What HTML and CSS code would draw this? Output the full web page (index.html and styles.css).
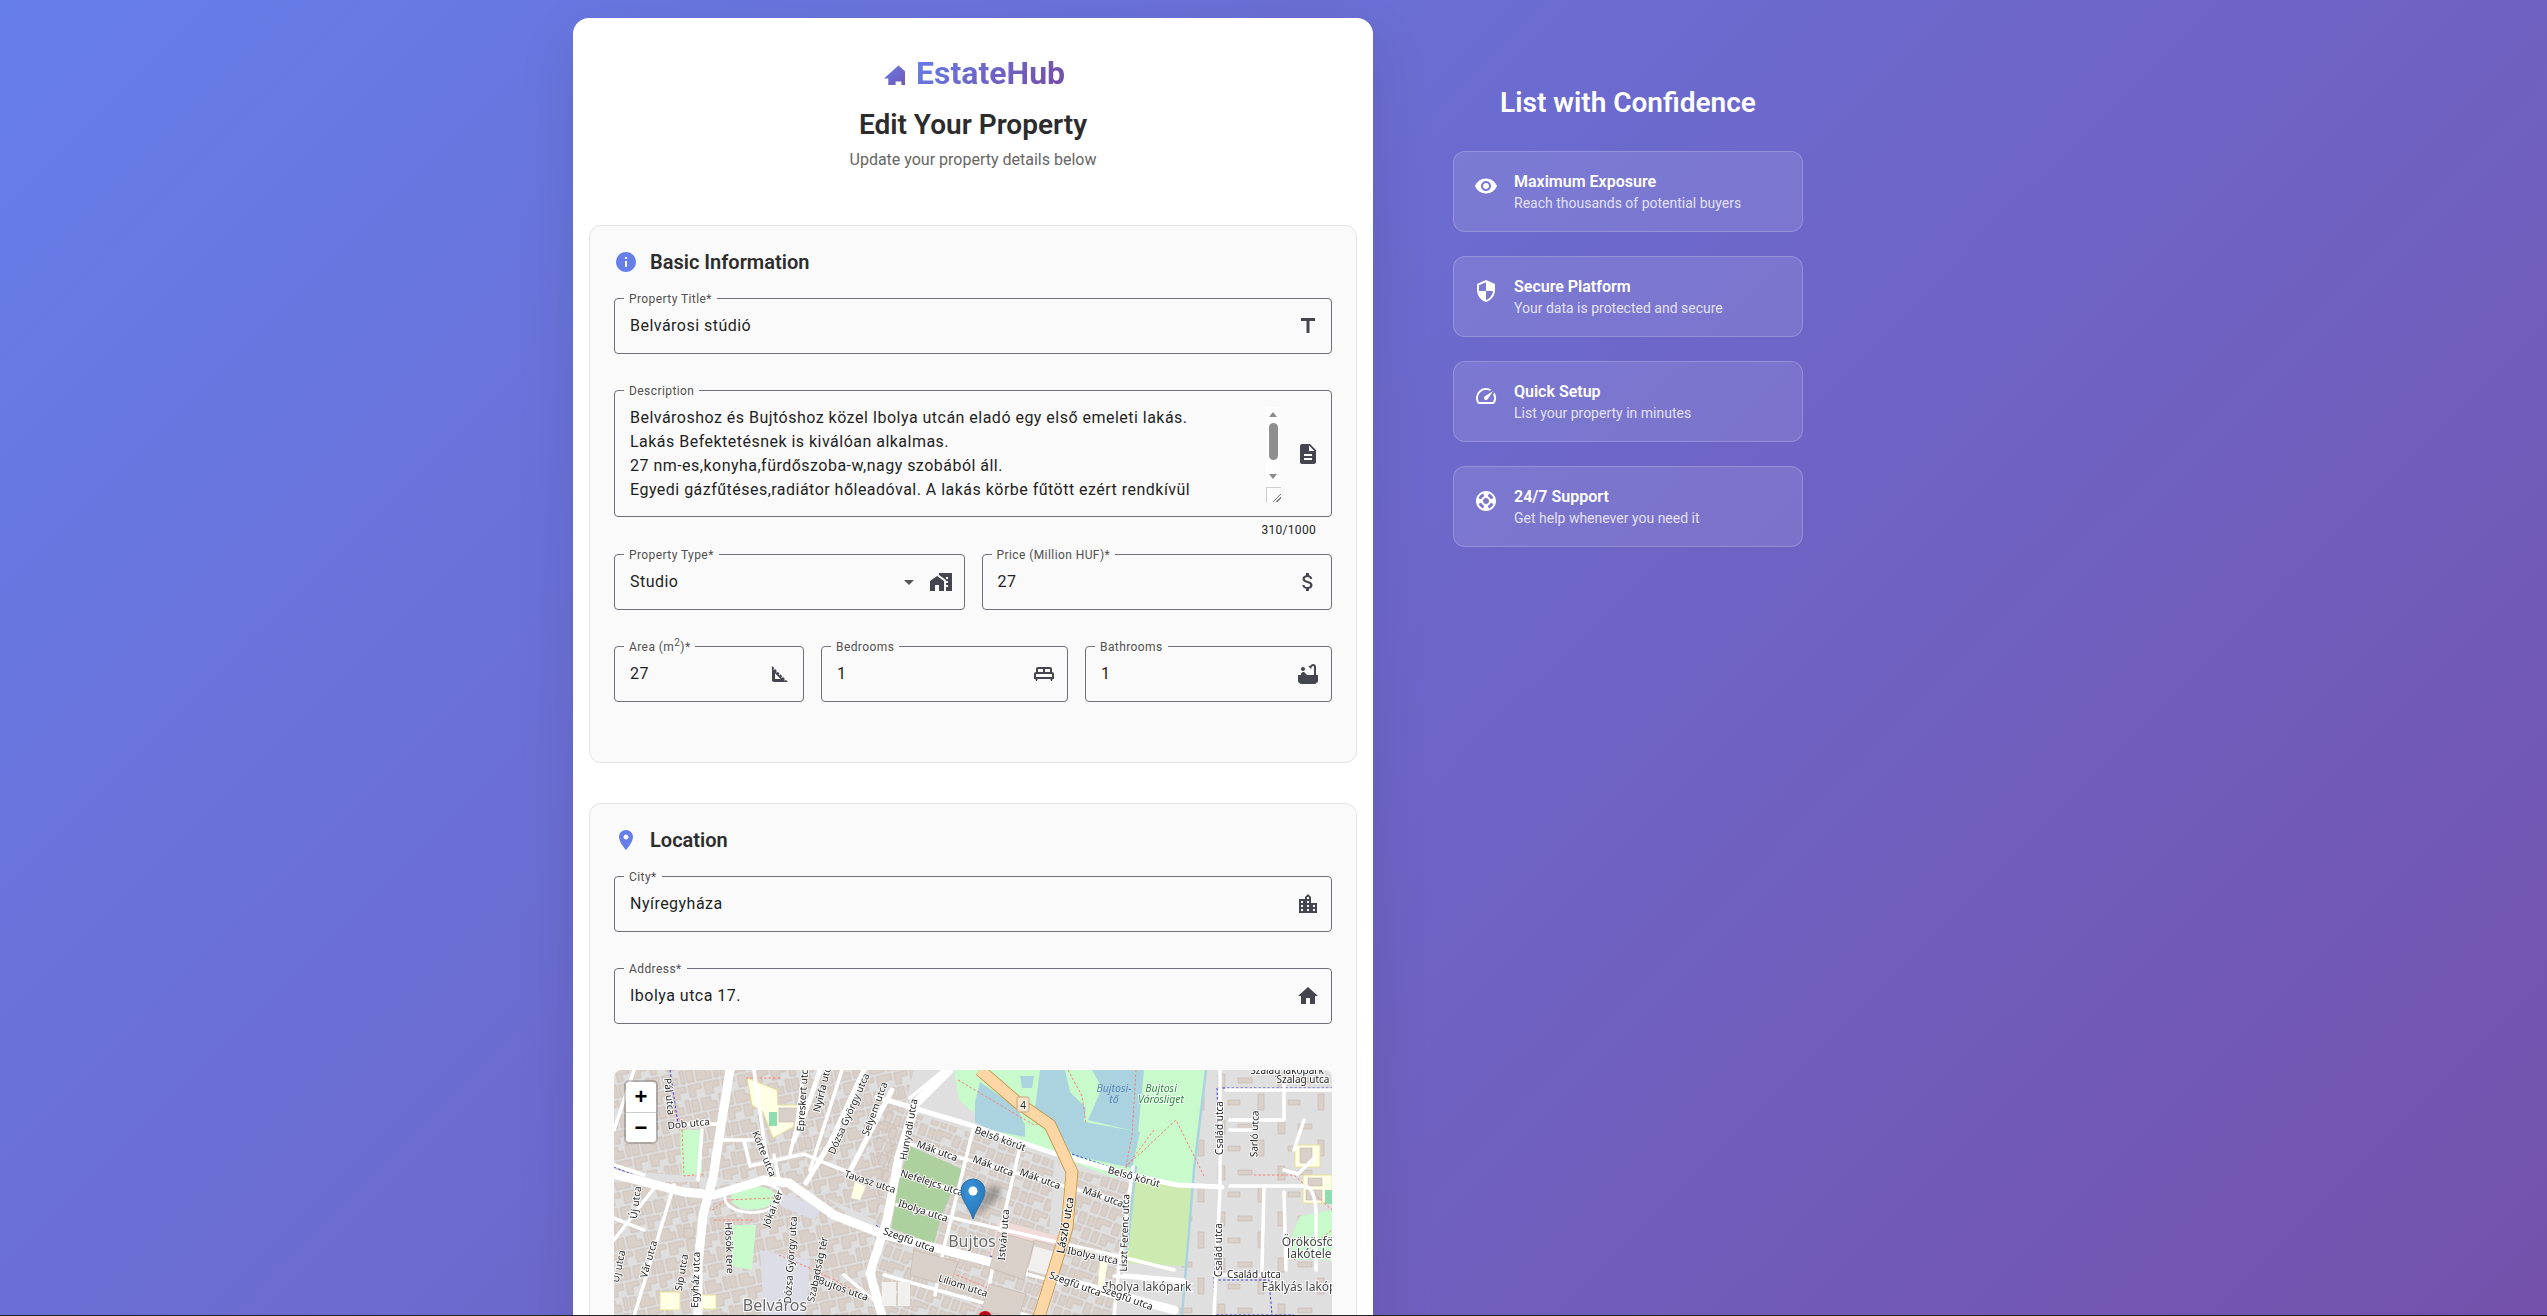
FILE: index.html
```html
<!DOCTYPE html>
<html lang="en">
<head>
    <meta charset="UTF-8">
    <title>EstateHub - Edit Your Property</title>
    <link rel="stylesheet" href="styles.css">
</head>
<body>
<div class="page">
    <main class="form-card">
        <header class="form-header">
            <div class="logo">
                <svg class="logo-icon" viewBox="0 0 16.6 16">
                    <defs>
                        <linearGradient id="logo-grad" x1="0" y1="0" x2="1" y2="1">
                            <stop offset="0" stop-color="#667eea"/>
                            <stop offset="1" stop-color="#764ba2"/>
                        </linearGradient>
                    </defs>
                    <path fill="url(#logo-grad)" d="M10 20v-6h4v6h5v-8h3L12 3 2 12h3v8z"/>
                </svg>
                <span class="logo-text">EstateHub</span>
            </div>
            <h1>Edit Your Property</h1>
            <p>Update your property details below</p>
        </header>

        <section class="section">
            <h2 class="section-title">
                <svg class="section-icon" viewBox="0 0 24 24"><path d="M12 2C6.48 2 2 6.48 2 12s4.48 10 10 10 10-4.48 10-10S17.52 2 12 2zm1 15h-2v-6h2v6zm0-8h-2V7h2v2z"/></svg>
                Basic Information
            </h2>

            <div class="field">
                <label class="field-label">Property Title*</label>
                <input class="field-input" type="text" value="Belvárosi stúdió">
                <svg class="field-icon" viewBox="0 0 24 24"><path d="M5 4v3h5.5v12h3V7H19V4z"/></svg>
            </div>

            <div class="field field-area">
                <label class="field-label">Description</label>
                <textarea class="field-textarea" rows="4">Belvároshoz és Bujtóshoz közel Ibolya utcán eladó egy első emeleti lakás.
Lakás Befektetésnek is kiválóan alkalmas.
27 nm-es,konyha,fürdőszoba-w,nagy szobából áll.
Egyedi gázfűtéses,radiátor hőleadóval. A lakás körbe fűtött ezért rendkívül gazdaságos az üzemeltetése, a rezsi alacsony.
Az ingatlan azonnal költözhető, tömegközlekedéssel jól megközelíthető.</textarea>
                <div class="scrollbar">
                    <span class="scroll-up"></span>
                    <span class="scroll-thumb"></span>
                    <span class="scroll-down"></span>
                    <span class="scroll-corner"></span>
                </div>
                <svg class="field-icon" viewBox="0 0 24 24"><path d="M14 2H6c-1.1 0-1.99.9-1.99 2L4 20c0 1.1.89 2 1.99 2H18c1.1 0 2-.9 2-2V8l-6-6zm2 16H8v-2h8v2zm0-4H8v-2h8v2zm-3-5V3.5L18.5 9H13z"/></svg>
            </div>
            <div class="helper">310/1000</div>

            <div class="row row-two">
                <div class="field">
                    <label class="field-label">Property Type*</label>
                    <div class="field-value">Studio</div>
                    <svg class="select-arrow" viewBox="0 0 24 24"><path d="M7 10l5 5 5-5z"/></svg>
                    <svg class="field-icon" viewBox="0 0 24 24"><path d="M1 11v10h5v-6h4v6h5V11L8 6z"/><path d="M10 3v1.97l7 5V11h2v2h-2v2h2v2h-2v4h6V3H10zm9 6h-2V7h2v2z"/></svg>
                </div>
                <div class="field">
                    <label class="field-label">Price (Million HUF)*</label>
                    <input class="field-input" type="text" value="27">
                    <svg class="field-icon" viewBox="0 0 24 24"><path d="M11.8 10.9c-2.27-.59-3-1.2-3-2.15 0-1.09 1.01-1.85 2.7-1.85 1.78 0 2.44.85 2.5 2.1h2.21c-.07-1.72-1.12-3.3-3.21-3.81V3h-3v2.16c-1.94.42-3.5 1.68-3.5 3.61 0 2.31 1.91 3.46 4.7 4.13 2.5.6 3 1.48 3 2.41 0 .69-.49 1.79-2.7 1.79-2.06 0-2.87-.92-2.98-2.1h-2.2c.12 2.19 1.76 3.42 3.68 3.83V21h3v-2.15c1.95-.37 3.5-1.5 3.5-3.55 0-2.84-2.43-3.81-4.7-4.4z"/></svg>
                </div>
            </div>

            <div class="row row-three">
                <div class="field">
                    <label class="field-label">Area (m<sup>2</sup>)*</label>
                    <input class="field-input" type="text" value="27">
                    <svg class="field-icon" viewBox="0 0 24 24"><path d="M17.66 17.66l-1.06 1.06-.71-.71 1.06-1.06-1.94-1.94-1.06 1.06-.71-.71 1.06-1.06-1.94-1.94-1.06 1.06-.71-.71 1.06-1.06L9.7 9.7l-1.06 1.06-.71-.71 1.06-1.06-1.94-1.94-1.06 1.06-.71-.71 1.06-1.06L4 4v14c0 1.1.9 2 2 2h14l-2.34-2.34zM7 17v-5.76L12.76 17H7z"/></svg>
                </div>
                <div class="field">
                    <label class="field-label">Bedrooms</label>
                    <input class="field-input" type="text" value="1">
                    <svg class="field-icon" viewBox="0 0 24 24"><path fill-rule="evenodd" d="M20 10V7c0-1.1-.9-2-2-2H6c-1.1 0-2 .9-2 2v3c-1.1 0-2 .9-2 2v5h1.33L4 19h1l.67-2h12.67l.66 2h1l.67-2H22v-5c0-1.1-.9-2-2-2zm-9 0H6V7h5v3zm7 0h-5V7h5v3zM4 15v-3h16v3H4z"/></svg>
                </div>
                <div class="field">
                    <label class="field-label">Bathrooms</label>
                    <input class="field-input" type="text" value="1">
                    <svg class="field-icon" viewBox="0 0 24 24"><circle cx="7" cy="7" r="2"/><path d="M20 13V4.83C20 3.27 18.73 2 17.17 2c-.75 0-1.47.3-2 .83l-1.25 1.25c-.16-.05-.33-.08-.51-.08-.4 0-.77.12-1.08.32l2.76 2.76c.2-.31.32-.68.32-1.08 0-.18-.03-.34-.07-.51l1.25-1.25c.15-.15.36-.24.58-.24.46 0 .83.37.83.83V13h-6.85c-.3-.21-.57-.45-.82-.72l-1.4-1.55c-.19-.21-.43-.38-.69-.5-.31-.15-.65-.23-1-.23C6 10 5 11 5 12.25V13H2v6c0 1.1.9 2 2 2 0 .55.45 1 1 1h14c.55 0 1-.45 1-1 1.1 0 2-.9 2-2v-6h-2z"/></svg>
                </div>
            </div>
        </section>

        <section class="section">
            <h2 class="section-title">
                <svg class="section-icon" viewBox="0 0 24 24"><path d="M12 2C8.13 2 5 5.13 5 9c0 5.25 7 13 7 13s7-7.75 7-13c0-3.87-3.13-7-7-7zm0 9.5c-1.38 0-2.5-1.12-2.5-2.5s1.12-2.5 2.5-2.5 2.5 1.12 2.5 2.5-1.12 2.5-2.5 2.5z"/></svg>
                Location
            </h2>

            <div class="field">
                <label class="field-label">City*</label>
                <input class="field-input" type="text" value="Nyíregyháza">
                <svg class="field-icon" viewBox="0 0 24 24"><path d="M15 11V5l-3-3-3 3v2H3v14h18V11h-6zm-8 8H5v-2h2v2zm0-4H5v-2h2v2zm0-4H5V9h2v2zm6 8h-2v-2h2v2zm0-4h-2v-2h2v2zm0-4h-2V9h2v2zm0-4h-2V5h2v2zm6 12h-2v-2h2v2zm0-4h-2v-2h2v2z"/></svg>
            </div>

            <div class="field">
                <label class="field-label">Address*</label>
                <input class="field-input" type="text" value="Ibolya utca 17.">
                <svg class="field-icon" viewBox="0 0 24 24"><path d="M10 20v-6h4v6h5v-8h3L12 3 2 12h3v8z"/></svg>
            </div>

            <div class="map">
                <svg class="map-svg" viewBox="0 0 718 400">
                    <defs>
                        <pattern id="blocks" width="34" height="30" patternUnits="userSpaceOnUse" patternTransform="rotate(-12)">
                            <path class="bld" d="M1 1h13v5H7v7H1zM17 1h15v6h-7v6h-8zM1 16h7v12H1zM11 16h10v5h5v7H11zM29 15h4v13h-4z"/>
                        </pattern>
                        <pattern id="blocks-tilt" width="36" height="28" patternUnits="userSpaceOnUse" patternTransform="rotate(20)">
                            <path class="bld" d="M1 1h15v5H7v6H1zM19 1h7v11h-7zM29 2h6v10h-6zM2 15h6v11H2zM11 15h14v5h-7v6h-7zM28 15h7v11h-7z"/>
                        </pattern>
                        <pattern id="blocks-sparse" width="60" height="46" patternUnits="userSpaceOnUse">
                            <path class="bld" d="M4 4h7v14H4zM24 8h14v5H24zM44 24h6v16h-6zM14 30h12v5H14z"/>
                        </pattern>
                        <radialGradient id="pin-grad" cx="0.4" cy="0.3" r="0.8">
                            <stop offset="0" stop-color="#3b94d9"/>
                            <stop offset="1" stop-color="#2371b4"/>
                        </radialGradient>
                    </defs>

                    <rect width="718" height="400" fill="#e0dfdf"/>

                    <!-- built up blocks -->
                    <path fill="url(#blocks)" d="M0 0H300L262 150 190 118 100 108 0 100zM0 112H92L60 246H0zM60 112H190L262 165 270 246H60z"/>
                    <path fill="url(#blocks-tilt)" d="M262 30L440 90 430 246H262zM460 100L516 112 500 246H436z"/>
                    <path fill="url(#blocks-sparse)" d="M575 0H718V246H565z"/>

                    <!-- land -->
                    <path fill="#c8facc" d="M340 0H516V100L500 108 440 85 380 60 345 30z"/>
                    <path fill="#c8facc" d="M516 0H592L580 116 510 104z"/>
                    <path fill="#cdebb0" d="M519 110L578 116 571 196 510 193z"/>
                    <path fill="#add19e" d="M296 76L350 100 340 122 288 100zM286 104L338 122 328 144 280 132zM281 136L326 150 320 174 277 158z"/>
                    <path fill="#ffffe5" stroke="#e8e098" d="M133 8L163 20 164 35 186 35 179 57 159 68 149 42 138 35z"/>
                    <rect x="155" y="42" width="8" height="14" fill="#8fdcb0"/>
                    <path class="bld" d="M165 38h19v14h-19z"/>
                    <path fill="#ffffe5" stroke="#e8e098" d="M46 222h20v18H46zM88 225h14v14H88z"/>
                    <path fill="#ffffe5" d="M241 112L252 116 246 130 237 128z"/>
                    <path fill="#f2dad9" d="M384 150L450 168 436 204 376 186z"/>
                    <path fill="#ffffe5" stroke="#e8e098" d="M681 75H706V97H681zM689 105H718V133H689z"/>
                    <path class="bld" d="M686 78h12v15h-12zM694 108h14v8h-14zM692 120h16v10h-16z"/>
                    <rect x="711" y="120" width="7" height="14" fill="#8fdcb0"/>
                    <path fill="#ffffe5" d="M486 190H494L490 216H484z"/>
                    <path fill="#c8facc" d="M686 146L718 140V190L680 190 676 170z"/>
                    <path fill="#dddde8" d="M146 180L196 190 192 246H150zM166 123L209 138 200 150 166 136z"/>
                    <path fill="#c8facc" d="M118 155H142L138 200 118 196zM125 118C150 112 168 122 160 132 150 142 125 142 118 132 116 126 118 120 125 118z"/>
                    <path fill="#c8facc" d="M66 60L88 60 88 104 68 106z"/>

                    <!-- water -->
                    <path fill="#aad3df" d="M366 12L403 38 411 55 411 67 376 60 361 52V32z"/>
                    <path fill="#aad3df" d="M406 6H420L418 18 408 18z"/>
                    <path fill="#aad3df" d="M426 0H451L456 22 472 38 470 52 526 62 518 98 462 86 456 82 436 54 421 38z"/>
                    <path fill="#aad3df" d="M478 0H530L524 62 474 50 488 18z"/>
                    <path class="stream" d="M592 0L580 100 568 246"/>
                    <path class="stream" d="M522 96L512 190"/>

                    <!-- paths -->
                    <path class="foot" d="M344 10L420 55 436 50M454 0L468 26 472 54M522 0L518 66 512 96 530 80 562 50 590 106M540 60L510 100M132 8H166M68 60L70 106 90 104M98 140L112 130 160 128 170 122M100 150L140 150M165 185L200 200 220 210 262 232M222 150L262 165M330 200L384 222M640 105H680L718 140M680 190L718 160M60 40L70 60"/>
                    <path class="border-dash" d="M0 97L20 105M458 84L516 104M604 18H718M603 18L606 120 600 210 600 245H680M56 0L64 54M376 186L432 202M600 210H655L658 245M262 155L268 160"/>

                    <!-- roads -->
                    <g class="road road-sm">
                        <path d="M20 0L0 60M62 54H104M60 115L20 246M40 118L0 170M88 60L84 110M130 70L136 96 190 84 216 95 240 104M104 70H140M140 0L150 70 156 106M160 85L165 110M190 0L182 60 176 84M228 0L196 100M0 95L30 105M0 148L30 160"/>
                        <path d="M330 0L296 28M292 73L512 133M287 103L345 122M283 135L508 187 560 200M407 73L385 167 369 246M359 60L330 177 321 225M519 97L505 197 500 246M270 205L430 250M230 205L262 232"/>
                        <path d="M606 0L606 120 600 245M612 20H718M640 60L616 60M616 116H690Q700 116 702 140V200M650 118L648 200M670 122L672 200M670 10V50H616M690 50L680 80M700 88L684 104 670 100M600 205H660M500 206L572 212"/>
                        <path d="M510 205L570 210"/>
                    </g>
                    <g class="road road-md">
                        <path d="M263 27L356 55 436 82 516 105 563 115 608 117"/>
                        <path d="M250 0L216 73 192 113"/>
                        <path d="M278 20L235 103"/>
                        <path d="M206 0L196 30 180 70"/>
                    </g>
                    <g class="road road-lg">
                        <path d="M0 104L70 122 100 125 150 110 175 113 220 145 271 165 440 208 560 240"/>
                        <path d="M116 0L106 62 99 108 89 145 84 195 84 246"/>
                        <path d="M335 0L302 33 285 87 273 150 256 203 268 246"/>
                    </g>
                    <path class="ring" d="M125 115C150 108 175 118 165 132 152 146 120 146 112 132 108 124 114 118 125 115z"/>

                    <!-- big buildings -->
                    <path class="bld" d="M384 162L420 172 410 210 376 198zM300 180L344 192 336 216 296 205zM375 214L412 224 404 250 368 240zM70 158h10v10H70zM420 170L450 178 436 208 414 202z"/>
                    <path fill="#f2f0ee" d="M420 176L448 184 436 206 414 200zM268 212h14v24h-14zM284 212h12v24h-12z"/>

                    <!-- motorway -->
                    <path class="trunk-edge" d="M366 0L403 32 436 55 458 102 453 158 433 222 424 250"/>
                    <path class="trunk" d="M366 0L403 32 436 55 458 102 453 158 433 222 424 250"/>
                    <rect class="shield" x="403" y="27" width="12" height="15" rx="2"/>
                    <text class="lbl" x="409" y="38.5" text-anchor="middle">4</text>

                    <!-- labels -->
                    <text class="lbl-water" x="500" y="22" text-anchor="middle">Bujtosi-</text>
                    <text class="lbl-water" x="500" y="33" text-anchor="middle">tő</text>
                    <text class="lbl-park" x="547" y="22" text-anchor="middle">Bujtosi</text>
                    <text class="lbl-park" x="547" y="33" text-anchor="middle">Városliget</text>
                    <text class="lbl-town" x="358" y="177" text-anchor="middle">Bujtos</text>
                    <text class="lbl-town" x="161" y="241" text-anchor="middle">Belváros</text>
                    <text class="lbl-place" x="534" y="221" text-anchor="middle">Ibolya lakópark</text>
                    <text class="lbl-place" x="694" y="221" text-anchor="middle">Fáklyás lakópark</text>
                    <text class="lbl-place" x="699" y="176" text-anchor="middle">Örökösföld</text>
                    <text class="lbl-place" x="699" y="188" text-anchor="middle">lakótelep</text>
                    <g class="lbl" text-anchor="middle">
                        <text transform="translate(385 72) rotate(20)">Belső körút</text>
                        <text transform="translate(519 110) rotate(16)">Belső körút</text>
                        <text transform="translate(322 84) rotate(20)">Mák utca</text>
                        <text transform="translate(378 99) rotate(20)">Mák utca</text>
                        <text transform="translate(425 112) rotate(20)">Mák utca</text>
                        <text transform="translate(488 130) rotate(20)">Mák utca</text>
                        <text transform="translate(317 116) rotate(18)">Nefelejcs utca</text>
                        <text transform="translate(308 144) rotate(18)">Ibolya utca</text>
                        <text transform="translate(478 189) rotate(12)">Ibolya utca</text>
                        <text transform="translate(255 115) rotate(18)">Tavasz utca</text>
                        <text transform="translate(294 173) rotate(20)">Szegfű utca</text>
                        <text transform="translate(460 217) rotate(20)">Szegfű utca</text>
                        <text transform="translate(512 231) rotate(20)">Szegfű utca</text>
                        <text transform="translate(348 219) rotate(18)">Liliom utca</text>
                        <text transform="translate(228 222) rotate(20)">Bujtos utca</text>
                        <text transform="translate(393 165) rotate(-85)">István utca</text>
                        <text transform="translate(455 156) rotate(-80)" class="lbl-big">László utca</text>
                        <text transform="translate(514 163) rotate(-88)">Liszt Ferenc utca</text>
                        <text transform="translate(609 58) rotate(-90)">Család utca</text>
                        <text transform="translate(608 180) rotate(-90)">Család utca</text>
                        <text x="640" y="208">Család utca</text>
                        <text transform="translate(644 64) rotate(-88)">Sarló utca</text>
                        <text x="673" y="4">Szalag lakópark</text>
                        <text x="689" y="13">Szalag utca</text>
                        <text transform="translate(298 60) rotate(-80)">Hunyadi utca</text>
                        <text transform="translate(264 40) rotate(-70)">Selyem utca</text>
                        <text transform="translate(238 45) rotate(-66)">Dózsa György utca</text>
                        <text transform="translate(212 18) rotate(-76)">Nyírfa utca</text>
                        <text transform="translate(192 28) rotate(-86)">Epreskert utca</text>
                        <text transform="translate(147 85) rotate(68)">Körte utca</text>
                        <text transform="translate(75 57) rotate(-6)">Dob utca</text>
                        <text transform="translate(162 140) rotate(-68)">Jókai tér</text>
                        <text transform="translate(112 178) rotate(88)">Hősök tere</text>
                        <text transform="translate(180 190) rotate(-86)">Dózsa György utca</text>
                        <text transform="translate(207 200) rotate(-78)">Szabadság tér</text>
                        <text transform="translate(85 210) rotate(-88)">Egyház utca</text>
                        <text transform="translate(71 203) rotate(-80)">Sip utca</text>
                        <text transform="translate(38 190) rotate(-74)">Vár utca</text>
                        <text transform="translate(25 133) rotate(-82)">Új utca</text>
                        <text transform="translate(8 197) rotate(-78)">Új utca</text>
                        <text transform="translate(52 27) rotate(84)">Pál utca</text>
                    </g>

                    <!-- markers -->
                    <path class="pin-shadow" d="M359 149L384 128C392 120 382 112 374 118z"/>
                    <path fill="url(#pin-grad)" stroke="#2a6fa8" d="M359 149C355 137 347 130 347 121A12 12 0 0 1 371 121C371 130 363 137 359 149z"/>
                    <circle cx="359" cy="121" r="4.5" fill="#fff"/>
                    <circle cx="371" cy="248" r="7" fill="#c00a1c"/>
                </svg>
                <div class="map-zoom">
                    <button class="map-zoom-btn">+</button>
                    <button class="map-zoom-btn">−</button>
                </div>
            </div>
        </section>
    </main>

    <aside class="sidebar">
        <h3 class="sidebar-title">List with Confidence</h3>
        <div class="benefit">
            <svg class="benefit-icon" viewBox="0 0 24 24"><path d="M12 4.5C7 4.5 2.73 7.61 1 12c1.73 4.39 6 7.5 11 7.5s9.27-3.11 11-7.5c-1.73-4.39-6-7.5-11-7.5zM12 17c-2.76 0-5-2.24-5-5s2.24-5 5-5 5 2.24 5 5-2.24 5-5 5zm0-8c-1.66 0-3 1.34-3 3s1.34 3 3 3 3-1.34 3-3-1.34-3-3-3z"/></svg>
            <div>
                <div class="benefit-title">Maximum Exposure</div>
                <div class="benefit-text">Reach thousands of potential buyers</div>
            </div>
        </div>
        <div class="benefit">
            <svg class="benefit-icon" viewBox="0 0 24 24"><path d="M12 1L3 5v6c0 5.55 3.84 10.74 9 12 5.16-1.26 9-6.45 9-12V5l-9-4zm0 10.99h7c-.53 4.12-3.28 7.79-7 8.94V12H5V6.3l7-3.11v8.8z"/></svg>
            <div>
                <div class="benefit-title">Secure Platform</div>
                <div class="benefit-text">Your data is protected and secure</div>
            </div>
        </div>
        <div class="benefit">
            <svg class="benefit-icon" viewBox="0 0 24 24"><path d="M20.38 8.57l-1.23 1.85a8 8 0 0 1-.22 7.58H5.07A8 8 0 0 1 15.58 6.85l1.85-1.23A10 10 0 0 0 3.35 19a2 2 0 0 0 1.72 1h13.85a2 2 0 0 0 1.74-1 10 10 0 0 0-.27-10.44zm-9.79 6.84a2 2 0 0 0 2.83 0l5.66-8.49-8.49 5.66a2 2 0 0 0 0 2.83z"/></svg>
            <div>
                <div class="benefit-title">Quick Setup</div>
                <div class="benefit-text">List your property in minutes</div>
            </div>
        </div>
        <div class="benefit">
            <svg class="benefit-icon" viewBox="0 0 24 24"><path d="M12 2C6.48 2 2 6.48 2 12s4.48 10 10 10 10-4.48 10-10S17.52 2 12 2zm7.46 7.12l-2.78 1.15c-.51-1.36-1.58-2.44-2.95-2.94l1.15-2.78c2.1.8 3.77 2.47 4.58 4.57zM12 15c-1.66 0-3-1.34-3-3s1.34-3 3-3 3 1.34 3 3-1.34 3-3 3zM9.13 4.54l1.17 2.78c-1.38.5-2.47 1.59-2.98 2.97L4.54 9.13c.81-2.11 2.48-3.78 4.59-4.59zM4.54 14.87l2.78-1.15c.51 1.38 1.59 2.46 2.97 2.96l-1.17 2.78c-2.1-.81-3.77-2.48-4.58-4.59zm10.34 4.59l-1.15-2.78c1.37-.51 2.45-1.59 2.95-2.97l2.78 1.17c-.81 2.1-2.48 3.77-4.58 4.58z"/></svg>
            <div>
                <div class="benefit-title">24/7 Support</div>
                <div class="benefit-text">Get help whenever you need it</div>
            </div>
        </div>
    </aside>
</div>
<div class="bottom-line"></div>
</body>
</html>
```

FILE: styles.css
```css
html, body {
    height: 100%;
    margin: 0;
    overflow: hidden;
}

body {
    background: linear-gradient(135deg, #667eea 0%, #764ba2 100%) no-repeat;
    background-size: 100% 1900px;
    font-family: Roboto, "Liberation Sans", sans-serif;
    color: #1f1f1f;
}

.page {
    display: flex;
    align-items: flex-start;
    gap: 80px;
    width: 1400px;
    margin-left: 573px;
    padding-top: 18px;
}

/* form card */
.form-card {
    flex: none;
    width: 800px;
    box-sizing: border-box;
    padding: 39px 16px 32px;
    background: #fff;
    border-radius: 16px;
    box-shadow: 0 20px 60px rgba(0, 0, 0, 0.1);
}

.form-header {
    height: 168px;
    text-align: center;
}

.logo {
    display: flex;
    justify-content: center;
    align-items: center;
    gap: 11px;
    height: 32px;
}

.logo-icon {
    width: 24.2px;
    height: 23.4px;
}

.logo-text {
    font-size: 32px;
    font-weight: 700;
    background: linear-gradient(135deg, #667eea, #764ba2);
    -webkit-background-clip: text;
    background-clip: text;
    color: transparent;
}

.form-header h1 {
    margin: 18px 0 5px;
    font-size: 28px;
    font-weight: 600;
    line-height: 36px;
    color: #2c2c2c;
}

.form-header p {
    margin: 0;
    font-size: 16px;
    line-height: 24px;
    color: #666;
}

.section {
    margin-bottom: 40px;
    padding: 24px;
    background: #fafafa;
    border: 1px solid #e4e4e4;
    border-radius: 12px;
}

.section-title {
    display: flex;
    align-items: center;
    gap: 12px;
    height: 24px;
    margin: 0 0 24px;
    font-size: 20px;
    font-weight: 600;
    color: #2c2c2c;
}

.section-icon {
    width: 24px;
    height: 24px;
    fill: #667eea;
}

/* fields */
.field {
    position: relative;
    display: flex;
    align-items: center;
    box-sizing: border-box;
    height: 56px;
    margin-bottom: 36px;
    padding: 0 11px 0 15px;
    border: 1px solid #70707a;
    border-radius: 4px;
}

.field-label {
    position: absolute;
    top: -7px;
    left: 9px;
    padding: 0 5px;
    background: #fafafa;
    font-size: 12px;
    line-height: 15px;
    letter-spacing: 0.42px;
    color: #505050;
    white-space: nowrap;
}

.field-label sup {
    font-size: 10px;
    line-height: 0;
}

.field-input,
.field-value {
    flex: 1;
    min-width: 0;
    padding: 0 0 2px;
    border: 0;
    outline: 0;
    background: transparent;
    font-family: inherit;
    font-size: 16px;
    letter-spacing: 0.48px;
    color: #1f1f1f;
}

.field-icon {
    flex: none;
    width: 24px;
    height: 24px;
    fill: #44454f;
}

.select-arrow {
    flex: none;
    width: 24px;
    height: 24px;
    margin-right: 8px;
    fill: #555;
}

.field-area {
    height: 127px;
    margin-bottom: 0;
}

.field-textarea {
    flex: none;
    width: 635px;
    height: 96px;
    margin-right: 31px;
    padding: 0;
    border: 0;
    outline: 0;
    resize: none;
    overflow: hidden;
    background: transparent;
    font-family: inherit;
    font-size: 16px;
    line-height: 24px;
    letter-spacing: 0.48px;
    color: #1f1f1f;
}

/* textarea scrollbar and resize corner, drawn over the box */
.scrollbar {
    position: absolute;
    top: 16px;
    right: 50px;
    width: 15px;
    height: 95px;
    background: #fdfdfd;
}

.scroll-up,
.scroll-down,
.scroll-thumb,
.scroll-corner {
    position: absolute;
    left: 3px;
}

.scroll-up {
    top: 5px;
    border: 4.5px solid transparent;
    border-top: 0;
    border-bottom: 5px solid #8a8a8a;
}

.scroll-down {
    top: 67px;
    border: 4.5px solid transparent;
    border-bottom: 0;
    border-top: 5px solid #8a8a8a;
}

.scroll-thumb {
    top: 16px;
    width: 9px;
    height: 37px;
    border-radius: 5px;
    background: #8f8f8f;
}

.scroll-corner {
    left: 0;
    top: 80px;
    width: 15px;
    height: 15px;
    box-sizing: border-box;
    border-left: 1px solid #cfcfcf;
    border-top: 1px solid #cfcfcf;
    background: linear-gradient(135deg, transparent 68%, #777 68%, #777 72%, transparent 72%, transparent 82%, #777 82%, #777 86%, transparent 86%);
}

.helper {
    height: 37px;
    padding: 4px 16px 0 0;
    box-sizing: border-box;
    text-align: right;
    font-size: 12px;
    line-height: 18px;
    letter-spacing: 0.3px;
    color: #222;
}

.row {
    display: grid;
    gap: 17px;
}

.row-two {
    grid-template-columns: minmax(0, 1fr) minmax(0, 1fr);
}

.row-three {
    grid-template-columns: 190px minmax(0, 1fr) minmax(0, 1fr);
}

/* map */
.map {
    position: relative;
    height: 400px;
    margin-top: 46px;
    border-radius: 8px;
    overflow: hidden;
}

.map-svg {
    display: block;
    width: 100%;
    height: 100%;
    filter: blur(0.35px);
}

.map-zoom {
    position: absolute;
    top: 10px;
    left: 10px;
    display: flex;
    flex-direction: column;
    background: #fff;
    border: 2px solid rgba(0, 0, 0, 0.2);
    border-radius: 5px;
    background-clip: padding-box;
}

.map-zoom-btn {
    width: 30px;
    height: 30px;
    padding: 0;
    border: 0;
    background: transparent;
    font-family: "Liberation Sans", sans-serif;
    font-size: 22px;
    font-weight: 700;
    line-height: 30px;
    color: #000;
}

.map-zoom-btn + .map-zoom-btn {
    border-top: 1px solid #ccc;
}

.bld {
    fill: #d9d0c9;
    stroke: #c4b6ab;
    stroke-width: 0.6;
}

.road {
    fill: none;
    stroke: #fff;
    stroke-linejoin: round;
    stroke-linecap: round;
}

.road-sm { stroke-width: 3.5; }
.road-md { stroke-width: 5; }
.road-lg { stroke-width: 9; }

.ring {
    fill: none;
    stroke: #fff;
    stroke-width: 3;
}

.trunk-edge {
    fill: none;
    stroke: #c0903f;
    stroke-width: 12.5;
}

.trunk {
    fill: none;
    stroke: #fcd6a4;
    stroke-width: 11;
}

.shield {
    fill: #f4e2c8;
    stroke: #c9a97e;
}

.stream {
    fill: none;
    stroke: #aad3df;
    stroke-width: 2.5;
}

.foot {
    fill: none;
    stroke: #fa8072;
    stroke-width: 1;
    stroke-dasharray: 2.5 2;
}

.border-dash {
    fill: none;
    stroke: #3b3be0;
    stroke-width: 1;
    stroke-dasharray: 2.5 2;
}

.lbl text,
text.lbl {
    font-family: "Noto Sans", sans-serif;
    font-size: 10px;
    fill: #222;
    stroke: #fff;
    stroke-width: 1.8px;
    paint-order: stroke;
}

.lbl text.lbl-big {
    font-size: 11px;
    fill: #000;
}

.lbl-water {
    font-family: "Noto Sans", sans-serif;
    font-size: 10.5px;
    font-style: italic;
    fill: #5d85b8;
}

.lbl-park {
    font-family: "Noto Sans", sans-serif;
    font-size: 10.5px;
    font-style: italic;
    fill: #2a8a3a;
    stroke: #fff;
    stroke-width: 1.5px;
    paint-order: stroke;
}

.lbl-town {
    font-family: "Noto Sans", sans-serif;
    font-size: 16px;
    fill: #666;
    stroke: #fff;
    stroke-width: 2px;
    paint-order: stroke;
}

.lbl-place {
    font-family: "Noto Sans", sans-serif;
    font-size: 12px;
    fill: #444;
    stroke: #fff;
    stroke-width: 2px;
    paint-order: stroke;
}

.pin-shadow {
    fill: rgba(0, 0, 0, 0.3);
    filter: blur(3px);
}

/* sidebar */
.sidebar {
    flex: none;
    width: 350px;
    display: flex;
    flex-direction: column;
    gap: 24px;
    padding-top: 67px;
}

.sidebar-title {
    margin: 0 0 6px;
    text-align: center;
    font-size: 28px;
    font-weight: 600;
    line-height: 36px;
    color: #fff;
}

.benefit {
    display: flex;
    align-items: flex-start;
    gap: 16px;
    padding: 20px;
    background: rgba(255, 255, 255, 0.1);
    border: 1px solid rgba(255, 255, 255, 0.2);
    border-radius: 12px;
    color: #fff;
}

.benefit-icon {
    flex: none;
    width: 24px;
    height: 24px;
    margin-top: 2px;
    fill: #fff;
}

.benefit-title {
    margin-bottom: 4px;
    font-size: 16px;
    font-weight: 600;
    line-height: 19px;
}

.benefit-text {
    font-size: 14px;
    line-height: 16px;
    color: rgba(255, 255, 255, 0.8);
}

.bottom-line {
    position: fixed;
    left: 0;
    right: 0;
    bottom: 0;
    height: 1px;
    background: #222;
}
```
